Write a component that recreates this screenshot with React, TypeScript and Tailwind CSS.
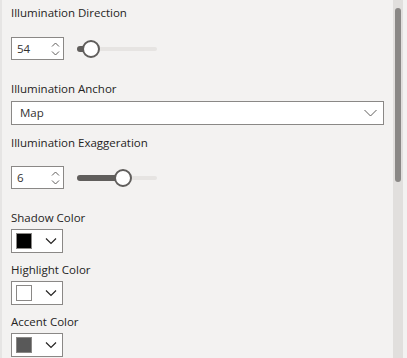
import type { JSX } from 'react';

const font = { fontFamily: '"Open Sans", "Segoe UI", sans-serif' };

function Label({ text, className }: { text: string; className: string }): JSX.Element {
    return <div className={`h-[16px] text-[11.5px] leading-[16px] text-[#252423] ${className}`}>{text}</div>;
}

function Spinner({ value }: { value: string }): JSX.Element {
    return (
        <div className="flex h-[23px] w-[53px] items-center justify-between border border-[#8a8886] bg-white pl-[5px] pr-[3px]">
            <span className="text-[11.5px] text-[#323130]">{value}</span>
            <svg width="9" height="16" viewBox="0 0 9 16" fill="none" stroke="#605e5c" strokeWidth="1">
                <path d="M1 5.5 L4.5 2 L8 5.5" />
                <path d="M1 10.5 L4.5 14 L8 10.5" />
            </svg>
        </div>
    );
}

function Slider({ pct }: { pct: number }): JSX.Element {
    return (
        <div className="relative ml-[13px] h-[20px] w-[80px]">
            <div className="absolute left-0 right-0 top-[8px] h-[4px] rounded-full bg-[#e6e4e2]" />
            <div
                className="absolute left-0 top-[7px] h-[6px] rounded-full bg-[#605e5c]"
                style={{ width: `${pct}%` }}
            />
            <div
                className="absolute top-[1px] h-[18px] w-[18px] -translate-x-1/2 rounded-full border-2 border-[#605e5c] bg-white"
                style={{ left: `${pct}%` }}
            />
        </div>
    );
}

function ColorPicker({ color }: { color: string }): JSX.Element {
    return (
        <div className="flex h-[24px] w-[52px] items-center border border-[#8a8886] bg-white pl-[4px]">
            <div className="h-[16px] w-[16px] border border-[#8a8886]" style={{ background: color }} />
            <svg className="ml-[13px]" width="12" height="8" viewBox="0 0 12 8" fill="none" stroke="#252423" strokeWidth="1.2">
                <path d="M1 1.5 L6 6.5 L11 1.5" />
            </svg>
        </div>
    );
}

export default function App(): JSX.Element {
    return (
        <div className="flex h-[358px] w-[407px] overflow-hidden bg-[#f3f2f1]" style={font}>
            <div className="w-[2px] bg-[#e6e5e4]" />
            <div className="flex w-[382px] flex-col pl-[9px] pt-[5px]">
                <Label text="Illumination Direction" className="" />
                <div className="mt-[16px] flex items-center">
                    <Spinner value="54" />
                    <Slider pct={17} />
                </div>
                <Label text="Illumination Anchor" className="mt-[21px]" />
                <div className="mt-[4px] flex h-[24px] w-[373px] items-center justify-between border border-[#8a8886] bg-white pl-[8px] pr-[6px]">
                    <span className="text-[11.5px] text-[#323130]">Map</span>
                    <svg width="13" height="8" viewBox="0 0 13 8" fill="none" stroke="#605e5c" strokeWidth="1">
                        <path d="M0.5 1 L6.5 7 L12.5 1" />
                    </svg>
                </div>
                <Label text="Illumination Exaggeration" className="mt-[10px]" />
                <div className="mt-[15px] flex items-center">
                    <Spinner value="6" />
                    <Slider pct={58} />
                </div>
                <Label text="Shadow Color" className="mt-[21px]" />
                <div className="mt-[3px]">
                    <ColorPicker color="#000000" />
                </div>
                <Label text="Highlight Color" className="mt-[9px]" />
                <div className="mt-[3px]">
                    <ColorPicker color="#ffffff" />
                </div>
                <Label text="Accent Color" className="mt-[9px]" />
                <div className="mt-[3px]">
                    <ColorPicker color="#595959" />
                </div>
            </div>
            <div className="ml-[9px] flex w-[10px] justify-center bg-[#e1dfdd] pt-[8px]">
                <div className="h-[174px] w-[6px] rounded-full bg-[#8a8886]" />
            </div>
        </div>
    );
}
